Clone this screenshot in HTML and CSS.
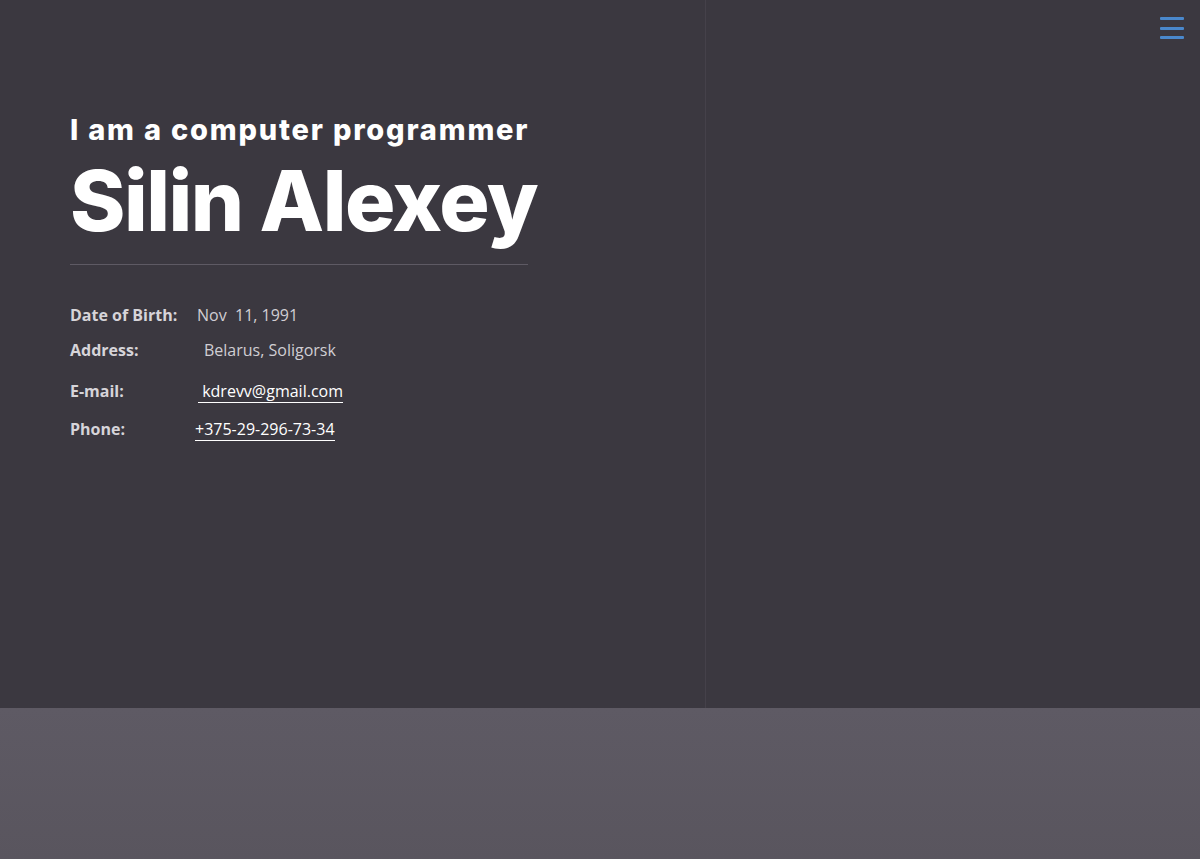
FILE: index.html
```html
<!DOCTYPE html>
<html lang="en">
<head>
<meta charset="utf-8">
<title>Silin Alexey</title>
<link rel="stylesheet" href="styles.css">
</head>
<body>
<div class="page">
  <section class="hero">
    <div class="left">
      <h2 class="subtitle">I am a computer programmer</h2>
      <h1 class="name">Silin Alexey</h1>
      <div class="divider"></div>
      <dl class="info">
        <div class="row r1"><dt>Date of Birth:</dt><dd class="v1">Nov&nbsp; 11, 1991</dd></div>
        <div class="row r2"><dt>Address:</dt><dd class="v2">Belarus, Soligorsk</dd></div>
        <div class="row r3"><dt>E-mail:</dt><dd class="v3"><a href="#">&nbsp;kdrevv@gmail.com</a></dd></div>
        <div class="row r4"><dt>Phone:</dt><dd class="v4"><a href="#">+375-29-296-73-34</a></dd></div>
      </dl>
    </div>
    <div class="right"></div>
    <button class="burger" aria-label="menu"><span></span><span></span><span></span></button>
  </section>
  <section class="bottom"></section>
</div>
</body>
</html>
```
FILE: styles.css
```css
* { box-sizing: border-box; }
html, body { margin: 0; padding: 0; }
body { background: #3b3840; font-family: "Open Sans", sans-serif; overflow: hidden; }
.page { width: 1200px; height: 859px; display: flex; flex-direction: column; }
.hero { height: 708px; display: flex; position: relative; background: #3b3840; }
.left { width: 706px; border-right: 1px solid #45414a; padding: 106px 0 0 70px; }
.right { flex: 1; }
.subtitle { margin: 0; font-family: Inter, sans-serif; font-weight: 800; font-size: 29px; line-height: 48px; color: #fff; letter-spacing: 1.8px; }
.name { margin: 0; font-family: Inter, sans-serif; font-weight: 800; font-size: 84px; line-height: 94px; color: #fff; letter-spacing: -1.5px; }
.divider { width: 458px; height: 1px; background: #5e5a64; margin-top: 16px; }
.info { margin: 39px 0 0; padding: 0; }
.row { display: flex; align-items: baseline; font-size: 16px; }
.row dt { width: 125px; font-weight: 700; color: #d6d4d9; }
.row dd { margin: 0; color: #d0ced3; }
.r1 { height: 22px; }
.r2 { margin-top: 13px; height: 22px; }
.r3 { margin-top: 19px; height: 22px; }
.r4 { margin-top: 16px; height: 22px; }
.v1 { padding-left: 2px; }
.v2 { padding-left: 9px; }
.v3 { padding-left: 3px; }
.v3 a, .v4 a { color: #fff; text-decoration: none; border-bottom: 1px solid #fff; padding-bottom: 0; }
.v4 { padding-left: 0; }
.burger { position: absolute; top: 17px; right: 16px; width: 24px; height: 22px; background: none; border: 0; padding: 0; display: flex; flex-direction: column; justify-content: space-between; cursor: pointer; }
.burger span { display: block; height: 3px; background: #4a88cc; border-radius: 1px; }
.bottom { flex: 1; background: linear-gradient(180deg, #5e5a64 0%, #59555e 100%); }
```
